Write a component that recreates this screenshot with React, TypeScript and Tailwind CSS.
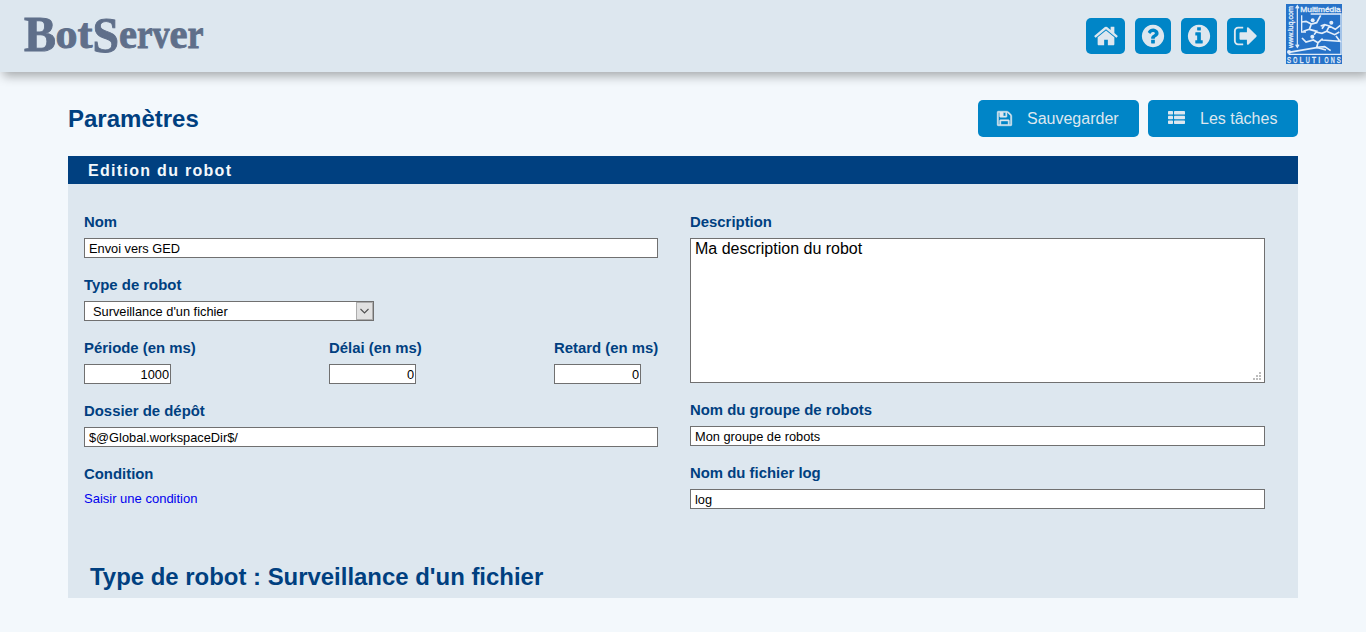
import type { ReactNode } from 'react';

const CIRCLE =
  'm640 416q0 209-103 385.5t-279.5 279.5-385.5 103-385.5-103-279.5-279.5-103-385.5 103-385.5 279.5-279.5 385.5-103 385.5 103 279.5 279.5 103 385.5z';

const ICONS = {
  home: 'M1472 992v480q0 26-19 45t-45 19h-384v-384h-256v384h-384q-26 0-45-19t-19-45v-480q0-1 .5-3t.5-3l575-474 575 474q1 2 1 6zm223-69l-62 74q-8 9-21 11h-3q-13 0-21-7l-692-577-692 577q-12 8-24 7-13-2-21-11l-62-74q-8-10-7-23.5t11-21.5l719-599q32-26 76-26t76 26l244 204v-195q0-14 9-23t23-9h192q14 0 23 9t9 23v408l219 182q10 8 11 21.5t-7 23.5z',
  help: 'M1024 1376v-192q0-14-9-23t-23-9h-192q-14 0-23 9t-9 23v192q0 14 9 23t23 9h192q14 0 23-9t9-23zm256-672q0-88-55.5-163t-138.5-116-170-41q-243 0-371 213-15 24 8 42l132 100q7 6 19 6 16 0 25-12 53-68 86-92 34-24 86-24 48 0 85.5 26t37.5 59q0 38-20 61t-68 45q-63 28-115.5 86.5t-52.5 125.5v36q0 14 9 23t23 9h192q14 0 23-9t9-23q0-19 21.5-49.5t54.5-49.5q32-18 49-28.5t46-35 44.5-48 28-60.5 12.5-81zm384 192q0 209-103 385.5t-279.5 279.5-385.5 103-385.5-103-279.5-279.5-103-385.5 103-385.5 279.5-279.5 385.5-103 385.5 103 279.5 279.5 103 385.5z',
  info:
    'M1152 1376v-160q0-14-9-23t-23-9h-96v-512q0-14-9-23t-23-9h-320q-14 0-23 9t-9 23v160q0 14 9 23t23 9h96v320h-96q-14 0-23 9t-9 23v160q0 14 9 23t23 9h448q14 0 23-9t9-23zm-128-896v-160q0-14-9-23t-23-9h-192q-14 0-23 9t-9 23v160q0 14 9 23t23 9h192q14 0 23-9t9-23z' +
    CIRCLE,
  signOut:
    'M704 1440q0 4 1 20t.5 26.5-3 23.5-10 19.5-20.5 6.5h-320q-119 0-203.5-84.5t-84.5-203.5v-704q0-119 84.5-203.5t203.5-84.5h320q13 0 22.5 9.5t9.5 22.5q0 4 1 20t.5 26.5-3 23.5-10 19.5-20.5 6.5h-320q-66 0-113 47t-47 113v704q0 66 47 113t113 47h312l11.5 1 11.5 3 8 5.5 7 9 2 13.5zm928-544q0 26-19 45l-544 544q-19 19-45 19t-45-19-19-45v-288h-448q-26 0-45-19t-19-45v-384q0-26 19-45t45-19h448v-288q0-26 19-45t45-19 45 19l544 544q19 19 19 45z',
  save: 'M512 1536h768v-384h-768v384zm896 0h128v-896q0-14-10-38.5t-20-34.5l-281-281q-10-10-34-20t-39-10v416q0 40-28 68t-68 28h-576q-40 0-68-28t-28-68v-416h-128v1280h128v-416q0-40 28-68t68-28h832q40 0 68 28t28 68v416zm-384-928v-320q0-13-9.5-22.5t-22.5-9.5h-192q-13 0-22.5 9.5t-9.5 22.5v320q0 13 9.5 22.5t22.5 9.5h192q13 0 22.5-9.5t9.5-22.5zm640 32v928q0 40-28 68t-68 28h-1344q-40 0-68-28t-28-68v-1344q0-40 28-68t68-28h928q40 0 88 20t76 48l280 280q28 28 48 76t20 88z',
};

function Icon({ name, className }: { name: keyof typeof ICONS; className: string }) {
  return (
    <svg viewBox="0 0 1792 1792" className={className} fill="currentColor" aria-hidden="true">
      <path d={ICONS[name]} />
    </svg>
  );
}

function Wordmark() {
  // letter, x, baseline, font size, drawn width
  const letters: [string, number, number, number, number][] = [
    ['B', 24, 51, 50, 32],
    ['o', 55.5, 47.5, 43, 22],
    ['t', 77.5, 47.5, 43, 15],
    ['S', 92.5, 52, 50, 26.5],
    ['e', 119, 47.5, 43, 18],
    ['r', 137, 47.5, 43, 15.5],
    ['v', 152.5, 47.5, 43, 17],
    ['e', 169.5, 47.5, 43, 18],
    ['r', 187.5, 47.5, 43, 16],
  ];
  return (
    <svg
      width="215"
      height="72"
      fill="#5f6f8a"
      stroke="#5f6f8a"
      strokeWidth="0.9"
      className="font-['Liberation_Serif',serif] font-bold"
      role="img"
    >
      <text>
        {letters.map(([ch, x, y, size, w], i) => (
          <tspan key={i} x={x} y={y} fontSize={size} textLength={w} lengthAdjust="spacingAndGlyphs">
            {ch}
          </tspan>
        ))}
      </text>
    </svg>
  );
}

function CompanyLogo() {
  return (
    <svg
      width="56"
      height="60"
      viewBox="0 0 168 180"
      className="overflow-visible font-['Liberation_Sans',sans-serif]"
      role="img"
    >
      <rect width="168" height="180" fill="#2672c8" />
      <g stroke="#e3eefa" fill="none" strokeWidth="5">
        <path d="M34 6V128M29 13l5-8 5 8M29 122l5 8 5-8" strokeWidth="3.5" />
        <path d="M74 30H165V151H8M47 34V84H60" strokeWidth="4" />
        <path d="M47 54L60 52L76 60L92 56L104 34M76 60L70 76L92 82L84 92M70 76L52 82" />
        <path d="M104 66L116 62L130 66L148 76L163 64M116 62L108 74M130 66L122 82L146 92L160 84M122 82L108 88L90 84" />
        <path d="M48 102L60 114L82 108L96 116L110 104M96 116L92 130L116 128L134 140M92 130L120 138M108 108L162 112L150 96" />
        <path d="M8 145L96 130" />
      </g>
      <g fill="#e3eefa">
        <circle cx="80" cy="49" r="6" />
        <circle cx="136" cy="56" r="6" />
        <circle cx="79" cy="98" r="6" />
        <circle cx="9" cy="144" r="6" />
        <text x="43" y="23" fontSize="24" textLength="121" lengthAdjust="spacingAndGlyphs" stroke="#e3eefa">
          Multimédia
        </text>
        <text
          transform="translate(22 132) rotate(-90)"
          fontSize="24"
          textLength="126"
          lengthAdjust="spacingAndGlyphs"
          stroke="#e3eefa"
        >
          www.luq.com
        </text>
        <text fontSize="27" stroke="#e3eefa" strokeWidth="1.2">
          {'SOLUTIONS'.split('').map((ch, i) => (
            <tspan key={i} x={3 + i * 18.7} y="176" textLength={ch === 'I' ? 6 : 12} lengthAdjust="spacingAndGlyphs">
              {ch}
            </tspan>
          ))}
        </text>
      </g>
    </svg>
  );
}

function NavButton({ name, className }: { name: keyof typeof ICONS; className: string }) {
  return (
    <button
      aria-label={name}
      className={`flex h-9 items-center justify-center rounded-[5px] bg-[#0085c7] text-[#dde7ef] ${className}`}
    >
      <Icon name={name} className="h-[26px] w-[26px]" />
    </button>
  );
}

function Field({ label, className = '', children }: { label: string; className?: string; children: ReactNode }) {
  return (
    <div className={`flex shrink-0 flex-col items-start gap-1.5 ${className}`}>
      <label className="text-[14.9px] leading-5 font-bold whitespace-nowrap text-[#004080]">{label}</label>
      {children}
    </div>
  );
}

function TextInput({ value, className }: { value: string; className: string }) {
  return (
    <input
      defaultValue={value}
      className={`block h-5 border border-[#707070] bg-white text-[12.8px] text-black outline-none ${className}`}
    />
  );
}

export default function App() {
  return (
    <div className="min-h-[632px] bg-[#f3f8fc] font-['Liberation_Sans',Arial,sans-serif]">
      <header className="flex h-[72px] items-center justify-between bg-[#dde7ef] pr-6 shadow-[3px_4px_10px_rgba(0,0,0,0.32)]">
        <Wordmark />
        <div className="flex items-center">
          <nav className="mr-[21px] flex gap-2.5">
            <NavButton name="home" className="w-[39px]" />
            <NavButton name="help" className="w-9" />
            <NavButton name="info" className="w-9" />
            <NavButton name="signOut" className="w-[38px]" />
          </nav>
          <div className="-mt-1">
            <CompanyLogo />
          </div>
        </div>
      </header>

      <main className="mx-[68px] pt-7">
        <div className="flex h-[37px] items-center justify-between">
          <h1 className="text-2xl font-bold text-[#004080]">Paramètres</h1>
          <div className="flex gap-[9px] text-base text-[#dde7ef]">
            <button className="flex h-[37px] w-[161px] items-center rounded-[5px] bg-[#0085c7] pl-[18px]">
              <Icon name="save" className="mr-[14px] h-[17px] w-[17px] stroke-current stroke-[50]" />
              Sauvegarder
            </button>
            <button className="flex h-[37px] w-[150px] items-center rounded-[5px] bg-[#0085c7] pl-5">
              <svg width="17" height="13" fill="currentColor" className="mr-[15px] -translate-y-px" aria-hidden="true">
                {[0, 4.7, 9.4].map((y) => (
                  <g key={y}>
                    <rect x="0" y={y} width="5" height="3.6" rx="0.7" />
                    <rect x="6" y={y} width="11" height="3.6" rx="0.7" />
                  </g>
                ))}
              </svg>
              Les tâches
            </button>
          </div>
        </div>

        <section className="mt-[19px] h-[442px] bg-[#dde7ef]">
          <h2 className="h-7 bg-[#004080] pt-px pl-5 text-base leading-7 font-bold tracking-[1.3px] text-[#f3f8fc]">
            Edition du robot
          </h2>
          <div className="flex gap-8 pt-7 pl-4">
            <div className="flex w-[574px] flex-col gap-[17px]">
              <Field label="Nom">
                <TextInput value="Envoi vers GED" className="w-full px-1" />
              </Field>
              <Field label="Type de robot">
                <button className="flex h-5 w-[290px] items-center justify-between border border-[#707070] bg-white pl-2 text-[12.8px] text-black">
                  <span className="pt-px">Surveillance d'un fichier</span>
                  <span className="flex h-[18px] w-[17px] items-center justify-center border border-[#adadad] bg-[#e1e1e1]">
                    <svg width="9" height="6" fill="none" stroke="#505050" strokeWidth="1.1" aria-hidden="true">
                      <path d="M0.5 1L4.5 5L8.5 1" />
                    </svg>
                  </span>
                </button>
              </Field>
              <div className="flex">
                <Field label="Période (en ms)" className="w-[245px]">
                  <TextInput value="1000" className="w-[87px] px-px text-right" />
                </Field>
                <Field label="Délai (en ms)" className="w-[225px]">
                  <TextInput value="0" className="w-[87px] px-px text-right" />
                </Field>
                <Field label="Retard (en ms)">
                  <TextInput value="0" className="w-[87px] px-px text-right" />
                </Field>
              </div>
              <Field label="Dossier de dépôt">
                <TextInput value="$@Global.workspaceDir$/" className="w-full px-1" />
              </Field>
              <Field label="Condition">
                <a className="-mt-px text-[13px] leading-5 text-[#0000ee]">Saisir une condition</a>
              </Field>
            </div>
            <div className="flex w-[575px] flex-col gap-[17px]">
              <Field label="Description">
                <div className="relative h-[145px] w-full">
                  <textarea
                    defaultValue="Ma description du robot"
                    className="block h-full w-full resize-none border border-[#707070] bg-white px-1 py-px text-base leading-[18px] text-black outline-none"
                  />
                  <svg width="8" height="8" fill="#bdbdbd" className="absolute right-1 bottom-[3px]" aria-hidden="true">
                    <path d="M6 0h2v2H6zM3 3h2v2H3zM6 3h2v2H6zM0 6h2v2H0zM3 6h2v2H3zM6 6h2v2H6z" />
                  </svg>
                </div>
              </Field>
              <Field label="Nom du groupe de robots">
                <TextInput value="Mon groupe de robots" className="w-full px-1" />
              </Field>
              <Field label="Nom du fichier log">
                <TextInput value="log" className="w-full px-1" />
              </Field>
            </div>
          </div>
          <h2 className="mt-[52px] pl-[22px] text-[23.93px] leading-8 font-bold text-[#004080]">
            Type de robot : Surveillance d'un fichier
          </h2>
        </section>
      </main>
    </div>
  );
}
